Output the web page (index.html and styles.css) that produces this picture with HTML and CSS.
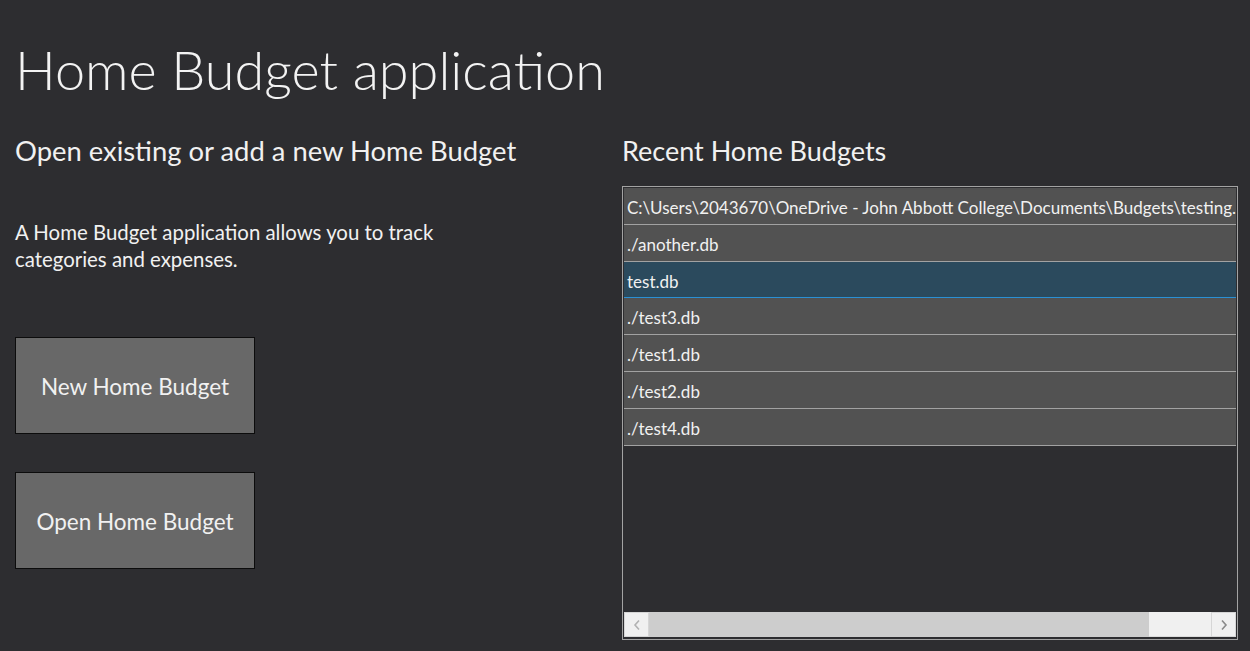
FILE: index.html
```html
<!DOCTYPE html>
<html lang="en">
<head>
<meta charset="utf-8">
<title>Home Budget application</title>
<link rel="stylesheet" href="styles.css">
</head>
<body>
<main class="page">
  <h1 class="title">Home Budget application</h1>
  <div class="columns">
    <section class="left">
      <h2 class="heading">Open existing or add a new Home Budget</h2>
      <p class="intro">A Home Budget application allows you to track<br>categories and expenses.</p>
      <div class="actions">
        <button class="action" type="button">New Home Budget</button>
        <button class="action" type="button">Open Home Budget</button>
      </div>
    </section>
    <section class="right">
      <h2 class="heading">Recent Home Budgets</h2>
      <div class="listbox">
        <ul class="items">
          <li class="item">C:\Users\2043670\OneDrive - John Abbott College\Documents\Budgets\testing.db</li>
          <li class="item">./another.db</li>
          <li class="item selected">test.db</li>
          <li class="item">./test3.db</li>
          <li class="item">./test1.db</li>
          <li class="item">./test2.db</li>
          <li class="item">./test4.db</li>
        </ul>
        <div class="hscroll">
          <span class="sbtn disabled">
            <svg width="8" height="12" viewBox="0 0 8 12"><path d="M6 1.5 L2 6 L6 10.5" fill="none" stroke="currentColor" stroke-width="1.6"/></svg>
          </span>
          <span class="thumb"></span>
          <span class="track"></span>
          <span class="sbtn">
            <svg width="8" height="12" viewBox="0 0 8 12"><path d="M2 1.5 L6 6 L2 10.5" fill="none" stroke="currentColor" stroke-width="1.6"/></svg>
          </span>
        </div>
      </div>
    </section>
  </div>
</main>
</body>
</html>
```
FILE: styles.css
```css
html, body {
  margin: 0;
  padding: 0;
  background: #2d2d30;
  height: 100%;
  overflow: hidden;
}

body {
  font-family: "Lato", "Noto Sans", sans-serif;
  color: #f1f1f1;
}

.page {
  padding: 38px 12px 0 14px;
}

.title {
  margin: 0 0 31px 1px;
  font-size: 54px;
  font-weight: 300;
  line-height: 64px;
  color: #f3f3f3;
}

.columns {
  display: grid;
  grid-template-columns: 608px 616px;
}

.heading {
  margin: 2px 0 0;
  font-size: 27px;
  font-weight: 400;
  line-height: 32px;
  color: #f1f1f1;
}

.left .heading {
  margin-left: 1px;
  font-size: 27.4px;
}

.intro {
  margin: 52px 0 0 1px;
  font-size: 20.4px;
  line-height: 26.7px;
  color: #f1f1f1;
}

.actions {
  display: flex;
  flex-direction: column;
  gap: 38px;
  margin-top: 64.6px;
  margin-left: 1px;
}

.action {
  width: 240px;
  height: 97px;
  box-sizing: border-box;
  border: 1px solid #0c0c0c;
  background: #686868;
  color: #f1f1f1;
  font-family: "Lato", "Noto Sans", sans-serif;
  font-size: 22.5px;
  padding: 2px 0 0;
  margin: 0;
}

.right {
  display: flex;
  flex-direction: column;
}

.listbox {
  margin-top: 19px;
  height: 454px;
  box-sizing: border-box;
  border: 1px solid #a3a3a3;
  padding: 1px;
  background: #2d2d30;
  display: flex;
  flex-direction: column;
}

.items {
  list-style: none;
  margin: 0;
  padding: 0;
  flex: 1;
  overflow: hidden;
}

.item {
  height: 33.8px;
  line-height: 35.8px;
  padding: 2px 0 0 3px;
  border-bottom: 1px solid #a2a2a2;
  background: #525252;
  font-size: 17px;
  color: #f1f1f1;
  white-space: nowrap;
  overflow: hidden;
}

.item.selected {
  background: #2b4a5d;
  border-bottom-color: #2a90d4;
}

.hscroll {
  display: flex;
  height: 25px;
  margin-bottom: 1px;
  background: #f0f0f0;
}

.sbtn {
  width: 25px;
  box-sizing: border-box;
  border: 1px solid #d6d6d6;
  background: #f0f0f0;
  display: flex;
  align-items: center;
  justify-content: center;
  color: #8a8a8a;
}

.sbtn.disabled {
  color: #b2b2b2;
}

.thumb {
  width: 500px;
  background: #cdcdcd;
}

.track {
  flex: 1;
  background: #f0f0f0;
  border-bottom: 1px solid #dcdcdc;
}
```
